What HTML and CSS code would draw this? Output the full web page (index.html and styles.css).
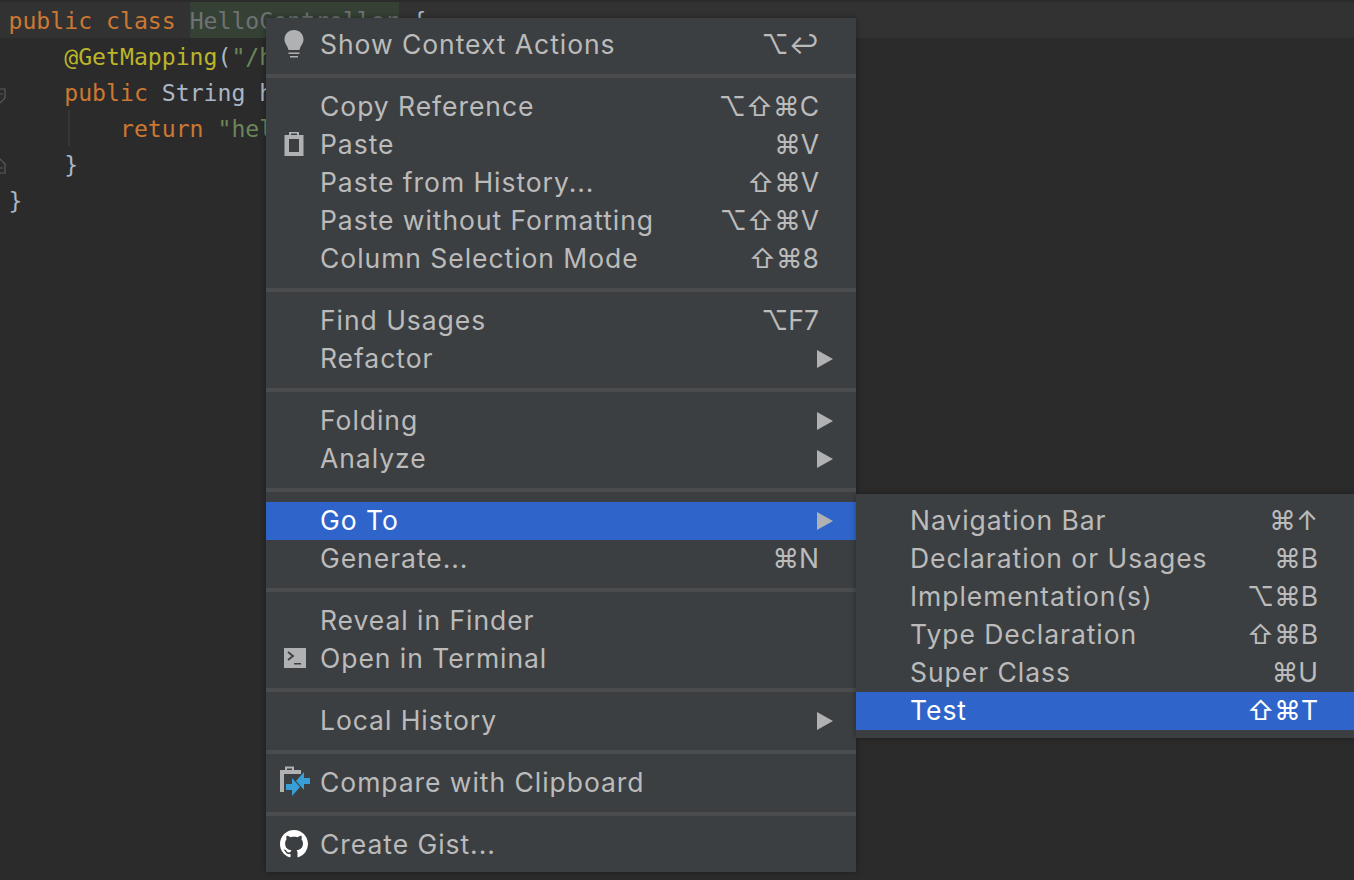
FILE: index.html
```html
<!DOCTYPE html>
<html lang="en">
<head>
<meta charset="utf-8">
<title>Context menu</title>
<link rel="stylesheet" href="styles.css">
</head>
<body>
<main class="editor">
<div class="code-line current"><span class="kw">public class </span><span class="sel">HelloController</span><span class="br"> {</span></div>
<div class="code-line"><span class="ann">    @GetMapping</span><span class="br">(</span><span class="str">"/h</span></div>
<div class="code-line"><span class="kw">    public </span><span class="br">String h</span></div>
<div class="code-line"><span class="kw">        return </span><span class="str">"hel</span></div>
<div class="code-line"><span class="br">    }</span></div>
<div class="code-line"><span class="br">}</span></div>
<svg class="fold fold-a" viewBox="0 0 6 16"><path d="M-6 1H5V10L0 15H-6" fill="none" stroke="#5a5d5f" stroke-width="1.2"/><path d="M-1 6H3" stroke="#5a5d5f"/></svg>
<svg class="fold fold-b" viewBox="0 0 6 16"><path d="M-6 15H5V6L0 1H-6" fill="none" stroke="#5a5d5f" stroke-width="1.2"/><path d="M-1 10H3" stroke="#5a5d5f"/></svg>
<div class="indent-guide"></div>
</main>

<nav class="menu main-menu">
<div class="item"><span class="ico"><svg width="22" height="30" viewBox="0 0 22 30"><path d="M11 1C5.500 1 1.500 5 1.500 10.500C1.500 14.500 4.500 16.500 5.500 21H16.500C17.500 16.500 20.500 14.500 20.500 10.500C20.500 5 16.500 1 11 1Z" fill="#afb1b3"/><path d="M5.500 23.500H16.500V25H5.500ZM7 27H15V28.500H7Z" fill="#afb1b3"/></svg></span><span class="label">Show Context Actions</span><span class="keys">⌥↩</span></div>
<div class="sep"></div>
<div class="item"><span class="label">Copy Reference</span><span class="keys">⌥⇧⌘C</span></div>
<div class="item"><span class="ico"><svg width="22" height="26" viewBox="0 0 22 26"><path d="M1.500 4H6V1H16V4H20.500V25H1.500Z" fill="#afb1b3"/><path d="M6 8H16V21H6Z" fill="#3c3f41"/><path d="M8 2.500H14V4H8Z" fill="#3c3f41"/></svg></span><span class="label">Paste</span><span class="keys">⌘V</span></div>
<div class="item"><span class="label">Paste from History...</span><span class="keys">⇧⌘V</span></div>
<div class="item"><span class="label">Paste without Formatting</span><span class="keys">⌥⇧⌘V</span></div>
<div class="item"><span class="label">Column Selection Mode</span><span class="keys">⇧⌘8</span></div>
<div class="sep"></div>
<div class="item"><span class="label">Find Usages</span><span class="keys">⌥F7</span></div>
<div class="item"><span class="label">Refactor</span><span class="arrow"></span></div>
<div class="sep"></div>
<div class="item"><span class="label">Folding</span><span class="arrow"></span></div>
<div class="item"><span class="label">Analyze</span><span class="arrow"></span></div>
<div class="sep"></div>
<div class="item active"><span class="label">Go To</span><span class="arrow"></span></div>
<div class="item"><span class="label">Generate...</span><span class="keys">⌘N</span></div>
<div class="sep"></div>
<div class="item"><span class="label">Reveal in Finder</span></div>
<div class="item"><span class="ico ico-term"><svg width="22" height="20" viewBox="0 0 22 20"><path d="M0 0H22V20H0Z" fill="#afb1b3"/><path d="M4 4L9 8L4 12" fill="none" stroke="#3c3f41" stroke-width="1.800"/><path d="M10 15H17V16.500H10Z" fill="#3c3f41"/></svg></span><span class="label">Open in Terminal</span></div>
<div class="sep"></div>
<div class="item"><span class="label">Local History</span><span class="arrow"></span></div>
<div class="sep"></div>
<div class="item"><span class="ico ico-cmp"><svg width="32" height="32" viewBox="0 0 32 32"><path d="M0 4H5V0.500H14V4H21V8H4V26H0Z" fill="#afb1b3"/><path d="M7 2.500H12V4H7Z" fill="#3c3f41"/><path d="M30 12H24V6L16 15L24 24V18H30Z" fill="#389fd6"/><path d="M6 18H12V12L20 21L12 30V24H6Z" fill="#389fd6"/></svg></span><span class="label">Compare with Clipboard</span></div>
<div class="sep"></div>
<div class="item"><span class="ico"><svg width="28" height="28" viewBox="0 0 16 16"><path fill="#fff" fill-rule="evenodd" d="M8 0C3.580 0 0 3.580 0 8c0 3.540 2.290 6.530 5.470 7.590.4.070.55-.17.55-.38 0-.19-.01-.82-.01-1.490-2.010.37-2.530-.49-2.690-.94-.09-.23-.48-.94-.82-1.130-.28-.15-.68-.52-.01-.53.63-.01 1.080.58 1.230.82.720 1.210 1.870.87 2.330.66.070-.52.280-.87.510-1.070-1.780-.2-3.640-.89-3.640-3.950 0-.87.310-1.590.820-2.150-.08-.2-.36-1.020.08-2.120 0 0 .67-.21 2.200.82.640-.18 1.320-.27 2-.27s1.360.09 2 .27c1.530-1.040 2.200-.82 2.200-.82.440 1.100.160 1.920.080 2.120.51.560.820 1.270.820 2.150 0 3.070-1.870 3.750-3.650 3.950.29.250.54.730.54 1.480 0 1.070-.01 1.930-.01 2.200 0 .21.150.46.550.38A8.010 8.010 0 0 0 16 8c0-4.420-3.580-8-8-8z"/></svg></span><span class="label">Create Gist...</span></div>
</nav>

<nav class="menu sub-menu">
<div class="item"><span class="label">Navigation Bar</span><span class="keys">⌘↑</span></div>
<div class="item"><span class="label">Declaration or Usages</span><span class="keys">⌘B</span></div>
<div class="item"><span class="label">Implementation(s)</span><span class="keys">⌥⌘B</span></div>
<div class="item"><span class="label">Type Declaration</span><span class="keys">⇧⌘B</span></div>
<div class="item"><span class="label">Super Class</span><span class="keys">⌘U</span></div>
<div class="item active"><span class="label">Test</span><span class="keys">⇧⌘T</span></div>
</nav>
</body>
</html>
```
FILE: styles.css
```css
* { box-sizing: border-box; }
html, body { margin: 0; height: 100%; overflow: hidden; }
body { background: #2b2b2b; width: 1354px; height: 880px; position: relative; }

.editor {
  padding-top: 2px;
  font-family: "DejaVu Sans Mono", "Liberation Mono", monospace;
  font-size: 23.150px;
  color: #a9b7c6;
}
.code-line { height: 36px; line-height: 39px; padding-left: 8.500px; white-space: pre; }
.code-line.current { background: #323232; }
.kw { color: #cc7832; }
.ann { color: #bbb529; }
.str { color: #6a8759; }
.br { color: #a9b7c6; }
.sel { background: #344134; color: #6f7275; display: inline-block; height: 36px; vertical-align: top; }

.fold { position: absolute; left: 0; width: 6px; height: 16px; }
.fold-a { top: 88px; }
.fold-b { top: 158px; }
.indent-guide { position: absolute; left: 68px; top: 110px; width: 2px; height: 36px; background: #373737; }

.menu {
  position: absolute;
  background: #3c3f41;
  font-family: Inter, Roboto, "Liberation Sans", sans-serif;
  font-size: 26.500px;
  letter-spacing: 0.950px;
  color: #bbbbbb;
}
.main-menu { left: 266px; top: 18px; width: 590px; padding: 8px 0; box-shadow: 0 0 6px rgba(0,0,0,.35); }
.sub-menu { left: 856px; top: 494px; width: 498px; padding: 8px 0; box-shadow: 0 0 6px rgba(0,0,0,.35); }

.item { height: 38px; display: flex; align-items: center; padding: 0 37px 3px 54px; position: relative; }
.sub-menu .item { padding-right: 36px; }
.item.active { background: #2f65ca; color: #fff; }
.label { flex: 1; white-space: nowrap; }
.keys { white-space: nowrap; letter-spacing: 0; }
.ico { position: absolute; left: 28px; top: 50%; transform: translate(-50%, -50%) translateY(-1px); display: flex; }
.ico-term { left: 29px; }
.ico-cmp { left: 30px; }
.arrow { width: 0; height: 0; border-left: 16px solid #afb1b3; border-top: 9px solid transparent; border-bottom: 9px solid transparent; margin: 3px -14px 0 0; }
.sep { height: 4px; margin: 10px 0; background: #4b4c4d; }
```
